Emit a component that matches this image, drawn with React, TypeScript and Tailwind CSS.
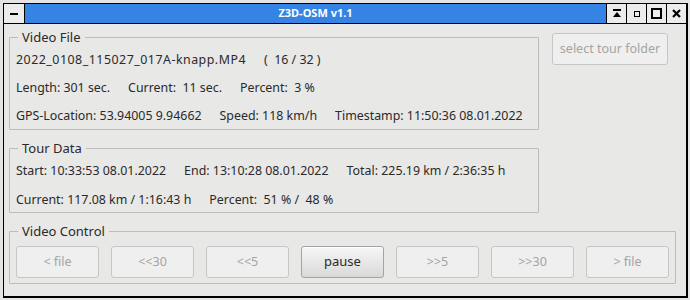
import React from "react";

const font = { fontFamily: '"Noto Sans", "Open Sans", sans-serif' };

function Row({ items, first }: { items: string[]; first?: string }) {
  return (
    <div className="flex gap-[18px] h-[18px] items-center whitespace-pre text-[12.4px] leading-[18px] text-[#2a2a2a]">
      {items.map((t, i) => (
        <span key={t} className={i === 0 && first ? first : ""}>
          {t}
        </span>
      ))}
    </div>
  );
}

function Group({
  title,
  className,
  children,
}: {
  title: string;
  className?: string;
  children: React.ReactNode;
}) {
  return (
    <fieldset className={"border border-[#bcbcbc] rounded-[1px] " + (className ?? "")}>
      <legend className="ml-[2px] px-[4px] text-[13px] leading-[18px] text-[#2a2a2a]">
        {title}
      </legend>
      {children}
    </fieldset>
  );
}

function CtlButton({ label, active }: { label: string; active?: boolean }) {
  if (active) {
    return (
      <button className="w-[83px] h-[32px] rounded-[3px] border border-[#a3a3a3] bg-gradient-to-b from-[#f6f6f6] to-[#d9d9d9] text-[13px] text-[#2a2a2a] shadow-[inset_0_1px_0_#ffffff]">
        {label}
      </button>
    );
  }
  return (
    <button className="w-[83px] h-[32px] rounded-[3px] border border-[#c6c6c6] bg-[#efefef] text-[12.5px] text-[#a4a4a4]">
      {label}
    </button>
  );
}

function TitleButton({ children }: { children: React.ReactNode }) {
  return (
    <div className="w-[20px] h-[19px] bg-[#ececec] border-l border-black flex items-center justify-center">
      {children}
    </div>
  );
}

export default function App() {
  return (
    <div className="w-[690px] h-[300px] bg-[#e4e4e4] pt-[3px] pl-[3px]" style={font}>
      <div className="w-[685px] h-[295px] border border-black border-r-2 border-b-2 bg-[#e8e8e7] flex flex-col">
        {/* title bar */}
        <div className="h-[20px] flex border-b border-black">
          <div className="w-[21px] h-[19px] bg-[#ececec] border-r border-black flex items-center justify-center">
            <div className="w-[8px] h-[2px] bg-black" />
          </div>
          <div className="flex-1 bg-[#3584e4] flex items-center justify-center text-white font-bold text-[11px]">
            Z3D-OSM v1.1
          </div>
          <TitleButton>
            <svg width="10" height="9" viewBox="0 0 10 9">
              <rect x="1" y="0" width="8" height="2" fill="black" />
              <path d="M5 3 L9 8 L1 8 Z" fill="black" />
            </svg>
          </TitleButton>
          <TitleButton>
            <svg width="6" height="6" viewBox="0 0 6 6">
              <rect x="0.5" y="0.5" width="5" height="5" fill="none" stroke="black" />
            </svg>
          </TitleButton>
          <TitleButton>
            <svg width="11" height="11" viewBox="0 0 11 11">
              <rect x="1" y="1" width="9" height="9" fill="none" stroke="black" strokeWidth="2" />
            </svg>
          </TitleButton>
          <TitleButton>
            <svg width="9" height="9" viewBox="0 0 9 9">
              <path d="M1 1 L8 8 M8 1 L1 8" stroke="black" strokeWidth="2.2" />
            </svg>
          </TitleButton>
        </div>

        {/* content */}
        <div className="flex flex-col px-[5px] pt-[4px]">
          <div className="flex">
            <div className="w-[530px] flex flex-col gap-[9px]">
              <Group title="Video File" className="pl-[6px] pt-[5px] pb-[4px] flex flex-col gap-[10px]">
                <Row first="tracking-[0.5px]" items={["2022_0108_115027_017A-knapp.MP4", "(  16 / 32 )"]} />
                <Row items={["Length: 301 sec.", "Current:  11 sec.", "Percent:  3 %"]} />
                <Row items={["GPS-Location: 53.94005 9.94662", "Speed: 118 km/h", "Timestamp: 11:50:36 08.01.2022"]} />
              </Group>
              <Group title="Tour Data" className="pl-[6px] pt-[5px] pb-[3px] flex flex-col gap-[11px]">
                <Row items={["Start: 10:33:53 08.01.2022", "End: 13:10:28 08.01.2022", "Total: 225.19 km / 2:36:35 h"]} />
                <Row items={["Current: 117.08 km / 1:16:43 h", "Percent:  51 % /  48 %"]} />
              </Group>
            </div>
            <div className="ml-[13px] mt-[5px]">
              <button className="w-[116px] h-[32px] rounded-[3px] border border-[#c6c6c6] bg-[#efefef] text-[12.5px] text-[#a4a4a4]">
                select tour folder
              </button>
            </div>
          </div>

          <Group title="Video Control" className="mt-[9px] w-[667px] pl-[6px] pt-[6px] pb-[5px]">
            <div className="flex gap-[12px]">
              <CtlButton label="< file" />
              <CtlButton label="<<30" />
              <CtlButton label="<<5" />
              <CtlButton label="pause" active />
              <CtlButton label=">>5" />
              <CtlButton label=">>30" />
              <CtlButton label="> file" />
            </div>
          </Group>
        </div>
      </div>
    </div>
  );
}
